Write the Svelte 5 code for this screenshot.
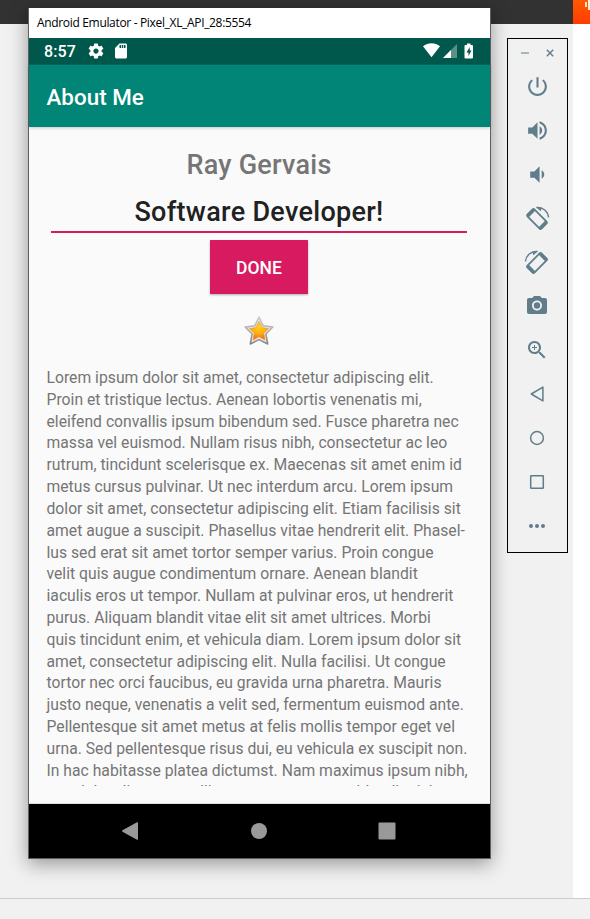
<script>
  const lines = [
    'Lorem ipsum dolor sit amet, consectetur adipiscing elit.',
    'Proin et tristique lectus. Aenean lobortis venenatis mi,',
    'eleifend convallis ipsum bibendum sed. Fusce pharetra nec',
    'massa vel euismod. Nullam risus nibh, consectetur ac leo',
    'rutrum, tincidunt scelerisque ex. Maecenas sit amet enim id',
    'metus cursus pulvinar. Ut nec interdum arcu. Lorem ipsum',
    'dolor sit amet, consectetur adipiscing elit. Etiam facilisis sit',
    'amet augue a suscipit. Phasellus vitae hendrerit elit. Phasel-',
    'lus sed erat sit amet tortor semper varius. Proin congue',
    'velit quis augue condimentum ornare. Aenean blandit',
    'iaculis eros ut tempor. Nullam at pulvinar eros, ut hendrerit',
    'purus. Aliquam blandit vitae elit sit amet ultrices. Morbi',
    'quis tincidunt enim, et vehicula diam. Lorem ipsum dolor sit',
    'amet, consectetur adipiscing elit. Nulla facilisi. Ut congue',
    'tortor nec orci faucibus, eu gravida urna pharetra. Mauris',
    'justo neque, venenatis a velit sed, fermentum euismod ante.',
    'Pellentesque sit amet metus at felis mollis tempor eget vel',
    'urna. Sed pellentesque risus dui, eu vehicula ex suscipit non.',
    'In hac habitasse platea dictumst. Nam maximus ipsum nibh,',
    'a sodales diam eu mollis nec urna cursus at blandit nisi'
  ];

  const materialTools = [
    { name: 'Power', d: 'M13 3h-2v10h2V3zm4.83 2.17l-1.42 1.42C17.99 7.86 19 9.81 19 12c0 3.87-3.13 7-7 7s-7-3.13-7-7c0-2.19 1.01-4.14 2.58-5.42L6.17 5.17C4.23 6.82 3 9.26 3 12c0 4.97 4.03 9 9 9s9-4.03 9-9c0-2.74-1.23-5.18-3.17-6.83z' },
    { name: 'Volume up', d: 'M3 9v6h4l5 5V4L7 9H3zm13.5 3c0-1.77-1.02-3.29-2.5-4.03v8.05c1.48-.73 2.5-2.25 2.5-4.02zM14 3.23v2.06c2.89.86 5 3.54 5 6.71s-2.11 5.85-5 6.71v2.06c4.01-.91 7-4.49 7-8.77s-2.99-7.86-7-8.77z' },
    { name: 'Volume down', d: 'M18.5 12c0-1.77-1.02-3.29-2.5-4.03v8.05c1.48-.73 2.5-2.25 2.5-4.02zM5 9v6h4l5 5V4L9 9H5z' }
  ];
</script>

{#snippet rotateShape()}
  <g transform="translate(12 13) rotate(45)">
    <rect x="-9.8" y="-4.9" width="19.6" height="9.8" rx="1.2" fill="none" stroke="currentColor" stroke-width="1.8" />
    <path d="M-10.500-4.500h3.500v9h-3.500zM7-4.500h3.500v9H7z" />
  </g>
  <path d="M11.500 1.500C18 .8 23 5.500 23.600 11.500" fill="none" stroke="currentColor" stroke-width="1.400" />
  <path d="M11 1L17 1.800L15.500 5.200z" />
{/snippet}

<div class="desktop">
  <div class="topbar">
    <div class="dark"></div>
    <div class="orange"><svg width="17" height="24" viewBox="0 0 17 24"><path d="M13 2v5M16 0v10" stroke="#fff" stroke-width="1.700" /></svg></div>
  </div>
  <div class="middle"><div class="panel"></div></div>
  <div class="bottom"></div>

  <section class="window">
    <header class="title"><span>Android Emulator - Pixel_XL_API_28:5554</span></header>
    <div class="status">
      <span class="clock">8:57</span>
      <svg class="gear" width="18" height="18" viewBox="0 0 24 24"><path d="M19.430 12.980c.04-.32.07-.64.07-.98s-.03-.66-.07-.98l2.110-1.650c.19-.15.24-.42.12-.64l-2-3.460c-.12-.22-.39-.3-.61-.22l-2.490 1c-.52-.4-1.080-.73-1.690-.98l-.38-2.650C14.460 2.180 14.250 2 14 2h-4c-.25 0-.46.18-.49.42l-.38 2.650c-.61.25-1.170.59-1.690.98l-2.490-1c-.23-.09-.49 0-.61.22l-2 3.460c-.13.22-.07.49.12.64l2.110 1.650c-.04.32-.07.65-.07.98s.03.66.07.98l-2.110 1.650c-.19.15-.24.42-.12.64l2 3.460c.12.22.39.3.61.22l2.490-1c.52.4 1.080.73 1.690.98l.38 2.650c.03.24.24.42.49.42h4c.25 0 .46-.18.49-.42l.38-2.650c.61-.25 1.170-.59 1.690-.98l2.490 1c.23.09.49 0 .61-.22l2-3.460c.12-.22.07-.49-.12-.64l-2.110-1.650zM12 15.500c-1.930 0-3.500-1.570-3.500-3.500s1.570-3.500 3.500-3.500 3.500 1.570 3.500 3.500-1.570 3.500-3.500 3.500z" /></svg>
      <svg class="sd" width="18" height="18" viewBox="0 0 24 24"><path d="M18 2h-8L4.020 8 4 20c0 1.100.9 2 2 2h12c1.100 0 2-.9 2-2V4c0-1.100-.9-2-2-2zm-6 6h-2V4h2v4zm3 0h-2V4h2v4zm3 0h-2V4h2v4z" /></svg>
      <svg class="signals" width="51" height="16" viewBox="0 0 51 16">
        <path d="M0 3.200C5-.7 12-.7 17 3.200L8.500 14.200z" />
        <path d="M34 1v14H20z" opacity=".35" />
        <path d="M28 7v8h-8z" />
        <path fill-rule="evenodd" d="M44 .5h3.500V2H49q1 0 1 1v11.500q0 1-1 1h-6.500q-1 0-1-1V3q0-1 1-1H44zM46.700 4L43.500 9.500h2V13l3-5.500h-1.800z" />
      </svg>
    </div>
    <div class="appbar"><h1>About Me</h1></div>
    <main>
      <p class="name">Ray Gervais</p>
      <div class="field">Software Developer!</div>
      <button>DONE</button>
      <svg class="star" width="32" height="32" viewBox="0 0 32 32">
        <defs>
          <linearGradient id="rim" x1="0" y1="0" x2="0" y2="1"><stop offset="0" stop-color="#ccc" /><stop offset="1" stop-color="#888" /></linearGradient>
          <radialGradient id="gold" cx=".5" cy=".3" r=".65"><stop offset="0" stop-color="#ffd21c" /><stop offset=".55" stop-color="#ffb00d" /><stop offset="1" stop-color="#f36b20" /></radialGradient>
        </defs>
        <path d="M16 2L20.100 10.700L29.800 12L22.900 19L24.700 29L16 24.600L7.300 29L9.100 19L2.200 12L11.900 10.700Z" fill="#e6e6e6" stroke="url(#rim)" stroke-width="1.600" stroke-linejoin="round" />
        <path d="M16 6.500L19 12.600L25.500 13.600L20.800 18.300L22 25L16 21.800L10 25L11.200 18.300L6.500 13.600L13 12.600Z" fill="url(#gold)" stroke="#f49a25" stroke-width=".6" />
      </svg>
      <div class="lorem">
        {#each lines as line}<div>{line}</div>{/each}
      </div>
    </main>
    <nav>
      <svg width="18" height="20" viewBox="0 0 18 20"><path d="M1.500 9.200L16 1.300q1-.5 1 .6v16.200q0 1.100-1 .6L1.500 10.800q-1.200-.8 0-1.600z" /></svg>
      <svg width="18" height="20" viewBox="0 0 18 20"><circle cx="9" cy="10" r="8" /></svg>
      <svg width="18" height="20" viewBox="0 0 18 20"><rect x=".5" y="1.500" width="17" height="17" rx="1" /></svg>
    </nav>
  </section>

  <aside class="tools">
    <div class="controls">
      <svg width="8" height="9" viewBox="0 0 8 9"><path d="M0 4h8" stroke="#9db0b8" stroke-width="1.800" /></svg>
      <svg width="8" height="9" viewBox="0 0 8 9"><path d="M.8 .8l6.400 6.400M7.200 .8L.8 7.200" stroke="#607d8b" stroke-width="1.400" /></svg>
    </div>
    {#each materialTools as tool}
      <div class="tool"><svg width="25" height="25" viewBox="0 0 24 24" aria-label={tool.name}><path d={tool.d} /></svg></div>
    {/each}
    <div class="tool"><svg width="24" height="24" viewBox="0 0 24 24">{@render rotateShape()}</svg></div>
    <div class="tool"><svg width="24" height="24" viewBox="0 0 24 24"><g transform="translate(24 0) scale(-1 1)">{@render rotateShape()}</g></svg></div>
    <div class="tool"><svg width="24" height="24" viewBox="0 0 24 24"><circle cx="12" cy="11.500" r="3.200" /><path d="M9 2L7.170 4H4c-1.100 0-2 .9-2 2v12c0 1.100.9 2 2 2h16c1.100 0 2-.9 2-2V6c0-1.100-.9-2-2-2h-3.170L15 2H9zm3 14.500c-2.760 0-5-2.240-5-5s2.240-5 5-5 5 2.240 5 5-2.240 5-5 5z" /></svg></div>
    <div class="tool"><svg width="24" height="24" viewBox="0 0 24 24"><path d="M15.500 14h-.79l-.28-.27C15.410 12.590 16 11.110 16 9.500 16 5.910 13.090 3 9.500 3S3 5.910 3 9.500 5.910 16 9.500 16c1.610 0 3.090-.59 4.230-1.570l.27.28v.79l5 4.990L20.490 19l-4.990-5zm-6 0C7.010 14 5 11.990 5 9.500S7.010 5 9.500 5 14 7.010 14 9.500 11.990 14 9.500 14zM12 10h-2v2H9v-2H7V9h2V7h1v2h2v1z" /></svg></div>
    <div class="tool outline"><svg width="24" height="24" viewBox="0 0 24 24"><path d="M6.300 12L17.900 5.100v13.800z" /></svg></div>
    <div class="tool outline"><svg width="24" height="24" viewBox="0 0 24 24"><circle cx="12" cy="12" r="6.400" /></svg></div>
    <div class="tool outline"><svg width="24" height="24" viewBox="0 0 24 24"><rect x="5.700" y="5.700" width="12.600" height="12.600" rx=".5" /></svg></div>
    <div class="tool"><svg width="24" height="24" viewBox="0 0 24 24"><circle cx="6" cy="12" r="2" /><circle cx="12" cy="12" r="2" /><circle cx="18" cy="12" r="2" /></svg></div>
  </aside>
</div>

<style>
  .desktop {
    position: relative;
    display: flex;
    flex-direction: column;
    width: 590px;
    height: 919px;
    overflow: hidden;
    font-family: Roboto, sans-serif;
  }
  svg { display: block; fill: currentColor; flex: none; }
  .topbar { display: flex; height: 24px; }
  .dark { width: 573px; background: #323232; }
  .orange { width: 17px; background: linear-gradient(#ff5a00, #ff3c00); }
  .middle { flex: 1; background: #fff; display: flex; }
  .panel { width: 573px; background: #f1f1f1; }
  .bottom { height: 20px; border-top: 1px solid #ccc; background: #f1f1f1; }

  .window {
    position: absolute;
    left: 28px;
    top: 8px;
    width: 461px;
    height: 850px;
    display: flex;
    flex-direction: column;
    border: 1px solid #5f5f5f;
    border-top: 0;
    box-shadow: 0 5px 18px rgba(0, 0, 0, .38);
  }
  .title {
    height: 30px;
    background: #fff;
    color: #000;
    font: 12px/30px "Open Sans", "Noto Sans", sans-serif;
    padding-left: 8px;
    white-space: nowrap;
    letter-spacing: -.33px;
  }
  .status {
    height: 27px;
    background: #00574b;
    color: #fff;
    display: flex;
    align-items: center;
    padding: 0 16px 1px 15px;
    box-sizing: border-box;
    box-shadow: inset 0 -1px #00685b;
  }
  .clock { font-size: 16px; font-weight: 500; width: 43px; letter-spacing: .1px; }
  .gear { margin-left: -.5px; }
  .sd { margin-left: 7px; }
  .signals { margin-left: auto; }
  .appbar {
    position: relative;
    height: 62px;
    background: #008577;
    color: #fff;
    display: flex;
    align-items: center;
    padding: 1px 0 0 17.500px;
    box-sizing: border-box;
    box-shadow: 0 1px 3px rgba(0, 0, 0, .2);
  }
  h1 { margin: 0; font-size: 22.400px; font-weight: 500; letter-spacing: .02px; }
  main {
    height: 677px;
    box-sizing: border-box;
    background: #fafafa;
    border-bottom: 1px solid #ddd;
    display: flex;
    flex-direction: column;
    align-items: center;
    padding: 18px 18px 17px 17px;
    overflow: hidden;
  }
  .name {
    margin: 0;
    font-size: 27px;
    line-height: 40px;
    font-weight: 500;
    color: #757575;
    letter-spacing: .25px;
  }
  .field {
    width: 416px;
    height: 45px;
    line-height: 53px;
    flex: none;
    text-align: center;
    font-size: 27px;
    font-weight: 500;
    color: #212121;
    letter-spacing: .3px;
    border-bottom: 2px solid #d81b60;
    margin-top: 1px;
  }
  button {
    flex: none;
    width: 98px;
    height: 54px;
    margin-top: 7px;
    padding: 1px 0 0;
    border: 0;
    background: #d81b60;
    color: #fff;
    font: 500 17.500px Roboto, sans-serif;
    box-shadow: 0 1px 2px rgba(0, 0, 0, .3);
  }
  .star { margin-top: 21px; }
  .lorem {
    align-self: stretch;
    margin-top: 20px;
    height: 419px;
    overflow: hidden;
    color: #757575;
    font-size: 15.700px;
    line-height: 21.820px;
    letter-spacing: .015px;
    white-space: nowrap;
  }
  .lorem div { padding-left: .5px; }
  nav {
    flex: 1;
    background: #000;
    color: #999;
    display: flex;
    align-items: center;
    justify-content: space-between;
    padding: 0 94px 0 92px;
  }
  .tools {
    position: absolute;
    left: 507px;
    top: 38px;
    width: 59px;
    height: 513px;
    border: 1px solid #000;
    color: #607d8b;
  }
  .controls {
    height: 25px;
    display: flex;
    align-items: center;
    justify-content: space-between;
    padding: 3px 13px 0 13px;
    box-sizing: border-box;
  }
  .tool {
    height: 44px;
    display: flex;
    align-items: center;
    justify-content: center;
    padding-right: 1px;
  }
  .tool svg { overflow: visible; }
  .outline svg { fill: none; stroke: currentColor; stroke-width: 1.500; stroke-linejoin: round; }
</style>
